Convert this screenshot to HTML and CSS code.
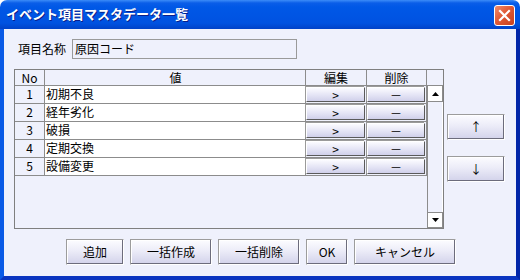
FILE: index.html
```html
<!DOCTYPE html>
<html lang="ja">
<head>
<meta charset="utf-8">
<title>イベント項目マスタデータ一覧</title>
<link rel="stylesheet" href="styles.css">
</head>
<body>
<div class="window">
  <div class="titlebar">
    <span class="title">イベント項目マスタデータ一覧</span>
    <div class="close">
      <svg width="13" height="13" viewBox="0 0 13 13"><path d="M2 2 L11 11 M11 2 L2 11" stroke="#fff" stroke-width="2.2" stroke-linecap="square"/></svg>
    </div>
  </div>
  <div class="client">
    <div class="name-row">
      <span class="label">項目名称</span>
      <div class="input">原因コード</div>
    </div>
    <div class="middle">
      <div class="table">
        <div class="cols">
          <div class="row head">
            <div class="cell c-no">No</div>
            <div class="cell c-val">値</div>
            <div class="cell c-ed">編集</div>
            <div class="cell c-del">削除</div>
          </div>
          <div class="row">
            <div class="cell c-no">1</div>
            <div class="cell c-val">初期不良</div>
            <div class="cell c-btn"><span class="cbtn">&gt;</span></div>
            <div class="cell c-btn"><span class="cbtn">－</span></div>
          </div>
          <div class="row">
            <div class="cell c-no">2</div>
            <div class="cell c-val">経年劣化</div>
            <div class="cell c-btn"><span class="cbtn">&gt;</span></div>
            <div class="cell c-btn"><span class="cbtn">－</span></div>
          </div>
          <div class="row">
            <div class="cell c-no">3</div>
            <div class="cell c-val">破損</div>
            <div class="cell c-btn"><span class="cbtn">&gt;</span></div>
            <div class="cell c-btn"><span class="cbtn">－</span></div>
          </div>
          <div class="row">
            <div class="cell c-no">4</div>
            <div class="cell c-val">定期交換</div>
            <div class="cell c-btn"><span class="cbtn">&gt;</span></div>
            <div class="cell c-btn"><span class="cbtn">－</span></div>
          </div>
          <div class="row">
            <div class="cell c-no">5</div>
            <div class="cell c-val">設備変更</div>
            <div class="cell c-btn"><span class="cbtn">&gt;</span></div>
            <div class="cell c-btn"><span class="cbtn">－</span></div>
          </div>
        </div>
        <div class="scroll">
          <div class="scroll-head"></div>
          <div class="scrollbar">
            <div class="sb-btn"><svg width="7" height="4" viewBox="0 0 7 4"><path d="M0 4 L3.5 0 L7 4 Z" fill="#000"/></svg></div>
            <div class="track"></div>
            <div class="sb-btn"><svg width="7" height="4" viewBox="0 0 7 4"><path d="M0 0 L7 0 L3.5 4 Z" fill="#000"/></svg></div>
          </div>
        </div>
      </div>
      <div class="side">
        <div class="btn side-btn">↑</div>
        <div class="btn side-btn">↓</div>
      </div>
    </div>
    <div class="bottom">
      <div class="btn b-add">追加</div>
      <div class="btn b-bulk">一括作成</div>
      <div class="btn b-bulk">一括削除</div>
      <div class="btn b-ok">OK</div>
      <div class="btn b-cancel">キャンセル</div>
    </div>
  </div>
</div>
</body>
</html>
```
FILE: styles.css
```css
* { box-sizing: border-box; }
html, body { margin: 0; padding: 0; background: #ffffff; }
body {
  font-family: "Noto Sans CJK JP", "Liberation Sans", sans-serif;
  font-size: 12px;
  color: #000;
}
.window {
  width: 520px;
  height: 280px;
  display: flex;
  flex-direction: column;
}
.titlebar {
  height: 29px;
  flex: none;
  display: flex;
  align-items: center;
  justify-content: space-between;
  padding: 0 5px 0 6px;
  border-radius: 7px 7px 0 0;
  background: linear-gradient(#3c8cf8 0, #0a5ee8 3px, #0058e6 7px, #0055e4 50%, #0052e0 80%, #0042c8 100%);
}
.title {
  color: #fff;
  font-weight: bold;
  font-size: 13px;
  line-height: 16px;
  text-shadow: 1px 1px 0 #0a1f8a;
  margin-top: -1px;
}
.close {
  width: 21px;
  height: 21px;
  border: 1px solid #fff;
  border-radius: 3px;
  background: linear-gradient(135deg, #f08c6c 0%, #e05a36 45%, #c8401e 100%);
  display: flex;
  align-items: center;
  justify-content: center;
  margin-top: 1px;
}
.client {
  flex: 1;
  background: #eff1fc;
  border-left: 4px solid #0a5ae6;
  border-right: 4px solid #0226a8;
  border-bottom: 4px solid #0a34c0;
  padding: 10px 0 0 10px;
  display: flex;
  flex-direction: column;
}
.name-row {
  display: flex;
  align-items: center;
  height: 20px;
}
.label {
  margin-left: 4px;
  width: 54px;
  line-height: 14px;
}
.input {
  width: 225px;
  height: 20px;
  border: 1px solid #9a9a9a;
  padding-left: 2px;
  line-height: 17px;
}
.middle {
  display: flex;
  margin-top: 10px;
}
.table {
  width: 430px;
  height: 160px;
  border: 1px solid #7f7f7f;
  display: flex;
  background: #eff1fc;
}
.cols {
  width: 412px;
  display: flex;
  flex-direction: column;
}
.row {
  display: grid;
  grid-template-columns: 30px 261px 61px 60px;
  height: 18px;
}
.row.head { height: 16px; }
.cell {
  border-right: 1px solid #8c8c8c;
  border-bottom: 1px solid #8c8c8c;
  line-height: 16px;
  white-space: nowrap;
}
.head .cell { line-height: 15px; text-align: center; }
.c-no { text-align: center; }
.c-val { background: #fff; padding-left: 1px; }
.head .c-val { background: transparent; }
.c-btn { padding: 1px 1px 1px 0; }
.cbtn {
  display: block;
  height: 15px;
  line-height: 13px;
  text-align: center;
  border: 1px solid;
  border-color: #ffffff #5a5a5a #5a5a5a #ffffff;
  box-shadow: -1px -1px 0 #9a9a9a;
  background: linear-gradient(#fbfbff, #e6e6f6 50%, #d0d0ea);
}
.scroll {
  width: 16px;
  display: flex;
  flex-direction: column;
}
.scroll-head {
  height: 16px;
  border-bottom: 1px solid #8c8c8c;
}
.scrollbar {
  flex: 1;
  display: flex;
  flex-direction: column;
  border-left: 1px solid #8c8c8c;
}
.sb-btn {
  height: 16px;
  background: #fff;
  border-right: 1px solid #8c8c8c;
  border-bottom: 1px solid #8c8c8c;
  display: flex;
  align-items: center;
  justify-content: center;
}
.sb-btn + .track + .sb-btn { border-top: 1px solid #8c8c8c; }
.track {
  flex: 1;
  background: #eff1fc;
  border-right: 1px solid #ffffff;
}
.side {
  margin-left: 3px;
  padding-top: 45px;
  display: flex;
  flex-direction: column;
  gap: 16px;
}
.btn {
  height: 26px;
  display: flex;
  align-items: center;
  justify-content: center;
  border: 1px solid;
  border-color: #9c9c9c #ffffff #ffffff #9c9c9c;
  box-shadow: inset -1px -1px 0 #6c6c7c, inset 1px 1px 0 #ffffff;
  background: linear-gradient(#fcfcff, #ececf8 45%, #d2d2ea);
  line-height: 14px;
}
.side-btn { width: 58px; }
.bottom {
  display: flex;
  gap: 6px;
  margin-top: 10px;
  padding-left: 52px;
}
.b-add { width: 58px; }
.b-bulk { width: 82px; }
.b-ok { width: 42px; }
.b-cancel { width: 102px; }
```
